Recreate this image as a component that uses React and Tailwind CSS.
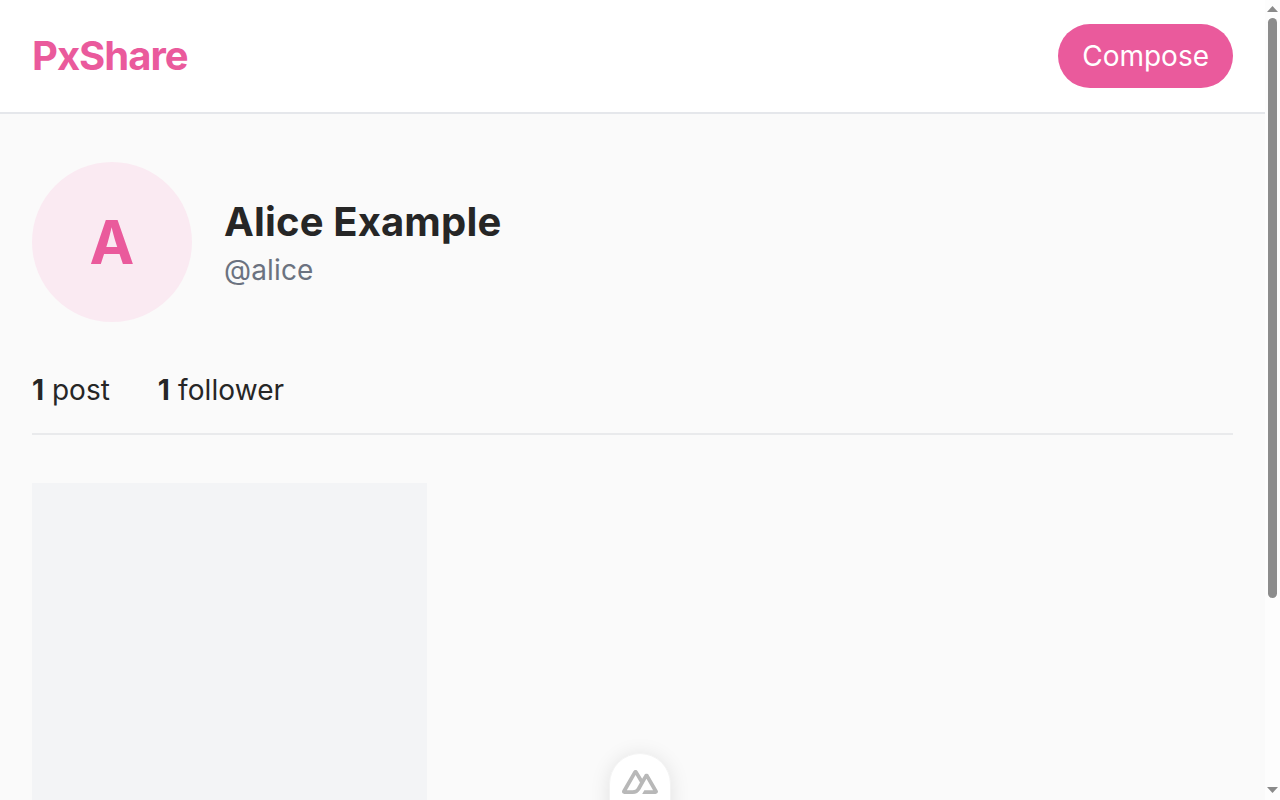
export default function App() {
  return (
    <div className="flex h-screen overflow-hidden bg-[#fafafa] text-[#262626] font-['Inter',sans-serif]">
      <div className="flex-1 min-w-0 overflow-hidden">
        <header className="flex items-center justify-between h-[114px] px-8 bg-white border-b-2 border-[#e5e7eb]">
          <div className="text-[40px] leading-none font-bold tracking-[-1px] text-[#ea5a9c]">PxShare</div>
          <button className="h-16 px-6 rounded-full bg-[#ea5a9c] text-white text-[28px] leading-none">Compose</button>
        </header>
        <main className="px-8 pt-12">
          <section className="flex items-center gap-8">
            <div className="flex items-center justify-center w-40 h-40 rounded-full bg-[#faeaf2] text-[60px] font-bold text-[#ea5a9c]">A</div>
            <div>
              <h1 className="text-[40px] leading-[56px] font-bold tracking-[0.15px]">Alice Example</h1>
              <p className="text-[28px] leading-[40px] tracking-[0.15px] text-[#6b7280]">@alice</p>
            </div>
          </section>
          <section className="flex gap-12 mt-[46px] pb-[21px] text-[28px] leading-[44px] border-b-2 border-[#e9eaec]">
            <span><b className="font-bold">1</b> post</span>
            <span className="tracking-[0.1px]"><b className="font-bold">1</b> follower</span>
          </section>
          <section className="grid grid-cols-3 gap-2 mt-12">
            <div className="h-[527px] bg-[#f3f4f6]" />
          </section>
        </main>
      </div>
      <aside className="flex flex-col items-center justify-between w-[15px] h-full pt-[6px] pb-[7px] bg-[#fdfdfd]">
        <svg width="11" height="6" viewBox="0 0 11 6" fill="#8a8a8a"><path d="M5.5 0L11 6H0z" /></svg>
        <div className="w-[9px] h-[580px] mb-auto mt-[6px] rounded-[5px] bg-[#8c8c8c]" />
        <svg width="11" height="6" viewBox="0 0 11 6" fill="#8a8a8a"><path d="M0 0H11L5.5 6z" /></svg>
      </aside>
      <div className="fixed left-[609px] top-[753px] flex justify-center w-[62px] h-[70px] pt-[16px] rounded-t-[31px] bg-white border border-[#f3f3f3] shadow-[0_2px_20px_rgba(0,0,0,0.1)]">
        <svg width="36" height="24" viewBox="44 115 424 283" fill="#b8b8b8">
          <path d="M281.44 397.667H438.32C443.326 397.667 448.118 395.908 452.453 393.427C456.789 390.946 461.258 387.831 463.76 383.533C466.262 379.236 468.002 374.36 468 369.399C467.998 364.437 466.266 359.563 463.76 355.268L357.76 172.947C355.258 168.65 352.201 165.534 347.867 163.053C343.532 160.573 337.325 158.813 332.32 158.813C327.315 158.813 322.521 160.573 318.187 163.053C313.852 165.534 310.795 168.65 308.293 172.947L281.44 219.587L227.733 129.13C225.229 124.834 222.176 120.307 217.84 117.827C213.504 115.346 208.713 115 203.707 115C198.701 115 193.909 115.346 189.573 117.827C185.238 120.307 180.771 124.834 178.267 129.13L46.8267 355.268C44.3208 359.563 44.0022 364.437 44 369.399C43.9978 374.36 44.3246 379.235 46.8267 383.533C49.3288 387.83 53.7979 390.946 58.1333 393.427C62.4688 395.908 67.2603 397.667 72.2667 397.667H171.2C210.401 397.667 238.934 380.082 258.827 346.787L306.88 263.4L332.32 219.587L410.053 352.44H306.88L281.44 397.667ZM169.787 352.44H100.533L203.707 174.36L256 263.4L221.361 323.784C208.151 345.387 193.089 352.44 169.787 352.44Z" />
        </svg>
      </div>
    </div>
  );
}
